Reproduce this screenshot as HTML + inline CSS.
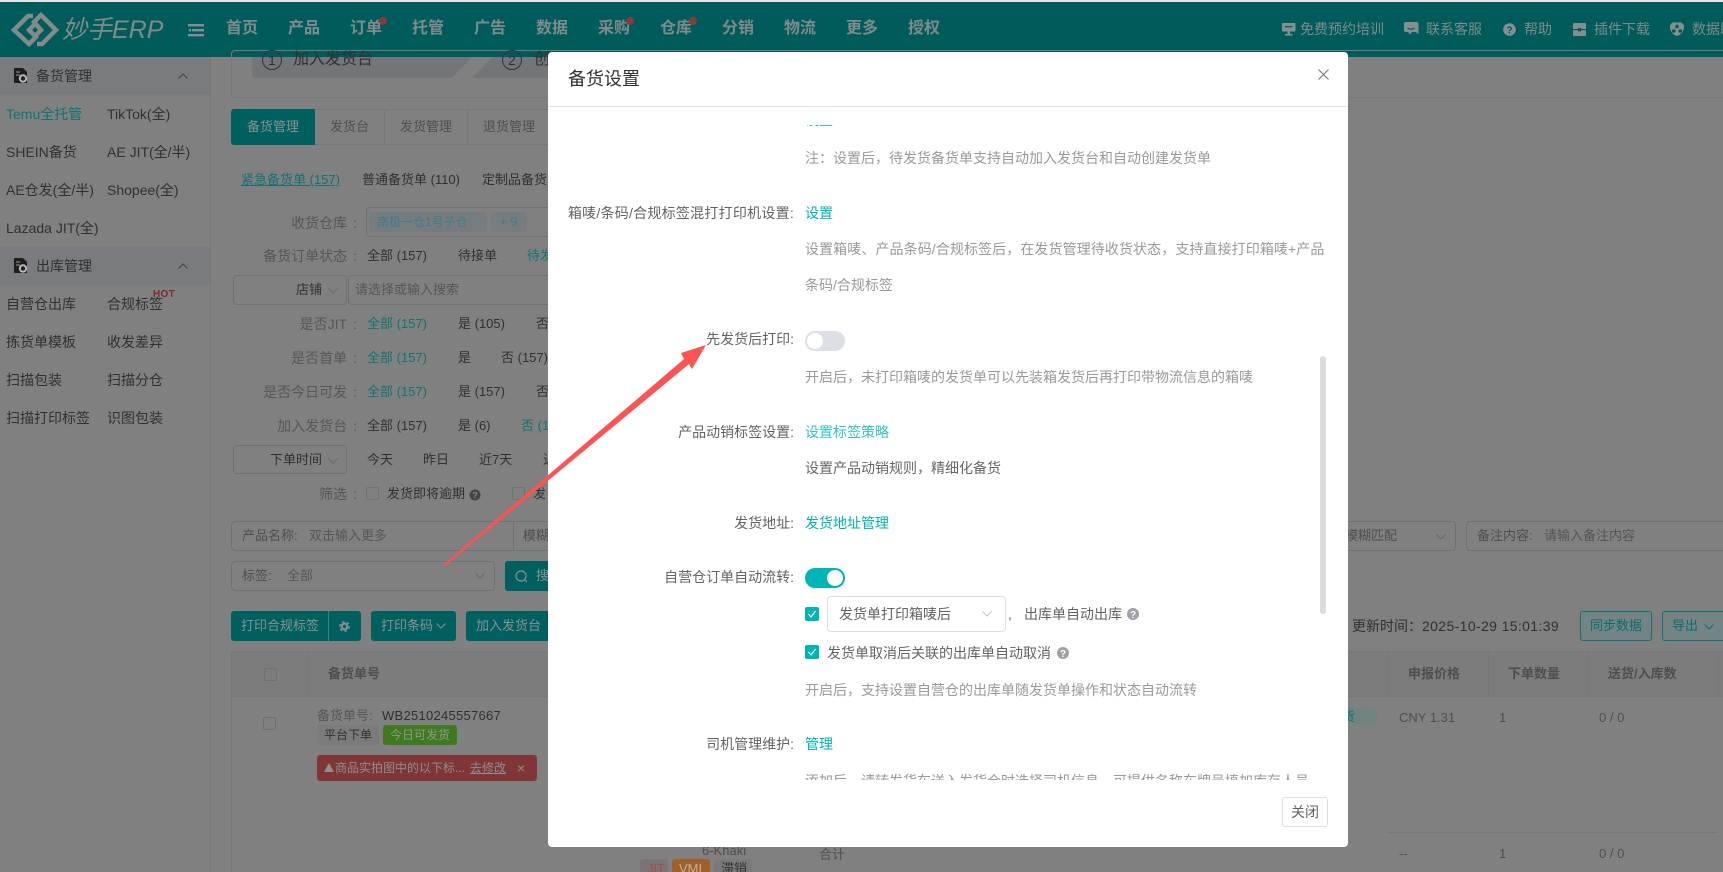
<!DOCTYPE html>
<html lang="zh-CN">
<head>
<meta charset="utf-8">
<title>备货设置</title>
<style>
html,body{margin:0;padding:0;width:1723px;height:872px;overflow:hidden;background:#808080}
#w{position:absolute;left:0;top:0;width:1723px;height:872px;overflow:hidden;filter:blur(.3px);font-family:"Liberation Sans","Noto Sans CJK SC",sans-serif;font-size:14px;color:#333}
.t{position:absolute;line-height:20px;margin-top:-10px;white-space:nowrap}
.b{position:absolute;box-sizing:border-box}
svg{position:absolute;overflow:visible}
.s{font-size:13px}
.g{color:#4e4e4e}.d{color:#303030}.k{color:#127272}.p{color:#565656}
.c{display:inline-block;margin:0 2px 0 6px}
.nav{font-size:16px;font-weight:700;color:#7f8b8b;top:29px}
.hr{color:#7f8b8b;top:29px}
.line{border:1px solid #6f7072;border-radius:4px}
.btn{background:#006060;border-radius:3px}
.w{color:#8c8f8f}
.th{font-weight:700;color:#4e4e4e;font-size:13px}
.lb{color:#606266;right:546px}
.ln{color:#00b3b3}
.ds{color:#999}
.dot{position:absolute;width:8px;height:8px;border-radius:50%;background:#8a3a3a}
.tag{overflow:hidden;font-size:13px;line-height:20px;padding-left:7px;border-radius:3px 3px 0 0}
</style>
</head>
<body>
<div id="w">
<!-- top -->
<div class="b" style="left:0;top:0;width:1723px;height:2px;background:#e4e4e4"></div>
<div class="b" style="left:0;top:2px;width:1723px;height:55px;background:#005b5b"></div>
<svg style="left:0;top:0" width="70" height="57" fill="none" stroke="#828a8a" stroke-width="4.5" stroke-linejoin="miter">
<path d="M33 16 L28 16 L14 30 L29 44 L36 37 L29 30 L34 25"/>
<path d="M37 44 L42 44 L56 30 L41 15 L34 22 L41 30 L36 35"/>
</svg>
<div class="t" style="left:62px;top:30px;font-size:25px;font-style:italic;color:#808a8a;line-height:30px;margin-top:-15px">妙手ERP</div>
<svg style="left:188px;top:24px" width="16" height="12" fill="#858f8f"><rect x="0" y="0" width="16" height="2.4"/><rect x="4" y="5" width="12" height="2.4"/><rect x="0" y="10" width="16" height="2.4"/><path d="M0 6.2L3 4.4V8z"/></svg>
<div class="t nav" style="left:226px">首页</div>
<div class="t nav" style="left:288px">产品</div>
<div class="t nav" style="left:350px">订单</div>
<div class="t nav" style="left:412px">托管</div>
<div class="t nav" style="left:474px">广告</div>
<div class="t nav" style="left:536px">数据</div>
<div class="t nav" style="left:598px">采购</div>
<div class="t nav" style="left:660px">仓库</div>
<div class="t nav" style="left:722px">分销</div>
<div class="t nav" style="left:784px">物流</div>
<div class="t nav" style="left:846px">更多</div>
<div class="t nav" style="left:908px">授权</div>
<div class="dot" style="left:379px;top:17px"></div>
<div class="dot" style="left:626px;top:17px"></div>
<div class="dot" style="left:689px;top:17px"></div>

<svg style="left:1282px;top:23px" width="14" height="14" fill="#858f8f"><rect x="0" y="0" width="13.5" height="8.5" rx="1"/><rect x="5.5" y="8.5" width="2.5" height="3"/><rect x="3" y="11" width="7.5" height="1.6"/><rect x="3" y="3" width="7.5" height="1.3" fill="#005b5b"/></svg>
<div class="t hr" style="left:1300px">免费预约培训</div>
<svg style="left:1404px;top:22px" width="15" height="14" fill="#858f8f"><path d="M2 0H12.5A2 2 0 0 1 14.5 2V12L11.5 10H8L6 12.5 4 10H2A2 2 0 0 1 0 8V2A2 2 0 0 1 2 0Z"/><path d="M3.5 6Q7 8.5 10.5 6" stroke="#005b5b" fill="none" stroke-width="1.2"/></svg>
<div class="t hr" style="left:1426px">联系客服</div>
<svg style="left:1503px;top:23px" width="13" height="13"><circle cx="6.5" cy="6.5" r="6.3" fill="#858f8f"/><text x="6.5" y="10.4" font-size="10" font-weight="700" text-anchor="middle" fill="#005b5b" font-family="Liberation Sans">?</text></svg>
<div class="t hr" style="left:1524px">帮助</div>
<svg style="left:1573px;top:23px" width="13" height="13" fill="#858f8f"><rect x="0" y="0" width="13" height="13" rx="1"/><rect x="0" y="6" width="13" height="1.2" fill="#005b5b"/><rect x="5" y="5" width="3" height="3.4" fill="#005b5b"/></svg>
<div class="t hr" style="left:1594px">插件下载</div>
<svg style="left:1670px;top:22px" width="14" height="14"><path d="M7 1C9 -.5 14 0 14 5 14 9.5 10 13.5 7 14 4 13.5 0 9.5 0 5 0 0 5 -.5 7 1Z" fill="#858f8f"/><circle cx="7" cy="4.5" r="1.8" fill="#005b5b"/><circle cx="3.8" cy="9" r="1.8" fill="#005b5b"/><circle cx="10.2" cy="9" r="1.8" fill="#005b5b"/></svg>
<div class="b" style="left:1692px;top:19px;width:31px;height:20px;overflow:hidden;line-height:20px;white-space:nowrap;color:#7f8b8b">数据助手</div>

<!-- sidebar -->
<div class="b" style="left:210px;top:57px;width:1px;height:815px;background:#76777a"></div>
<div class="b" style="left:0;top:57px;width:210px;height:38px;background:#797b7e"></div>
<div class="b" style="left:0;top:247px;width:210px;height:38px;background:#797b7e"></div>
<svg style="left:14px;top:68px" width="14" height="16"><path d="M0 0H9L13 4V15H0Z" fill="#1e1e1e"/><path d="M2 4H6M2 7H6" stroke="#808080" stroke-width="1.3"/><circle cx="9" cy="10.5" r="3.2" fill="none" stroke="#b8b8b8" stroke-width="2"/></svg>
<svg style="left:14px;top:258px" width="14" height="16"><path d="M0 0H9L13 4V15H0Z" fill="#1e1e1e"/><path d="M2 4H6M2 7H6" stroke="#808080" stroke-width="1.3"/><circle cx="9" cy="10.5" r="3.2" fill="none" stroke="#b8b8b8" stroke-width="2"/></svg>
<div class="t d" style="left:36px;top:76px">备货管理</div>
<div class="t d" style="left:36px;top:266px">出库管理</div>
<svg style="left:178px;top:73px" width="10" height="6" fill="none" stroke="#444" stroke-width="1"><path d="M.5 5.5L5 1l4.500 4.500"/></svg>
<svg style="left:178px;top:263px" width="10" height="6" fill="none" stroke="#444" stroke-width="1"><path d="M.5 5.5L5 1l4.500 4.500"/></svg>
<div class="t k" style="left:6px;top:114px">Temu全托管</div>
<div class="t d" style="left:107px;top:114px">TikTok(全)</div>
<div class="t d" style="left:6px;top:152px">SHEIN备货</div>
<div class="t d" style="left:107px;top:152px">AE JIT(全/半)</div>
<div class="t d" style="left:6px;top:190px">AE仓发(全/半)</div>
<div class="t d" style="left:107px;top:190px">Shopee(全)</div>
<div class="t d" style="left:6px;top:228px">Lazada JIT(全)</div>
<div class="t d" style="left:6px;top:304px">自营仓出库</div>
<div class="t d" style="left:107px;top:304px">合规标签</div>
<div class="t" style="left:153px;top:295px;font-size:10px;font-weight:700;color:#7d2d2d;letter-spacing:.3px">HOT</div>
<div class="t d" style="left:6px;top:342px">拣货单模板</div>
<div class="t d" style="left:107px;top:342px">收发差异</div>
<div class="t d" style="left:6px;top:380px">扫描包装</div>
<div class="t d" style="left:107px;top:380px">扫描分仓</div>
<div class="t d" style="left:6px;top:418px">扫描打印标签</div>
<div class="t d" style="left:107px;top:418px">识图包装</div>

<!-- main top panel -->
<div class="b" style="left:231px;top:50px;width:1492px;height:48px;border:1px solid #77787a;border-right:0;border-radius:4px 0 0 4px"></div>
<svg style="left:252px;top:57px" width="400" height="21"><path d="M0 0H220L200 21H4Q0 21 0 17Z" fill="#747578"/><path d="M240 0H400V21H220Z" fill="#747578"/></svg>
<div class="b" style="left:262px;top:50px;width:20px;height:20px;border:1px solid #333;border-radius:50%"></div>
<div class="t d" style="left:268px;top:60px">1</div>
<div class="t d" style="left:293px;top:60px;font-size:16px">加入发货台</div>
<div class="b" style="left:502px;top:50px;width:20px;height:20px;border:1px solid #333;border-radius:50%"></div>
<div class="t d" style="left:508px;top:60px">2</div>
<div class="t d" style="left:534px;top:60px;font-size:16px">创</div>

<!-- tabs -->
<div class="b" style="left:231px;top:109px;width:320px;height:36px;border:1px solid #76777a;border-radius:3px"></div>
<div class="b" style="left:231px;top:109px;width:84px;height:36px;background:#006060;border-radius:3px 0 0 3px"></div>
<div class="b" style="left:384px;top:109px;width:1px;height:36px;background:#76777a"></div>
<div class="b" style="left:467px;top:109px;width:1px;height:36px;background:#76777a"></div>
<div class="t s" style="left:247px;top:127px;color:#8a9090">备货管理</div>
<div class="t g s" style="left:330px;top:127px">发货台</div>
<div class="t g s" style="left:400px;top:127px">发货管理</div>
<div class="t g s" style="left:483px;top:127px">退货管理</div>

<div class="t k s" style="left:241px;top:180px;text-decoration:underline">紧急备货单 (157)</div>
<div class="t d s" style="left:362px;top:180px">普通备货单 (110)</div>
<div class="t d s" style="left:482px;top:180px">定制品备货单</div>

<div class="t p" style="right:1364px;top:223px">收货仓库<span class="c">:</span></div>
<div class="b line" style="left:366px;top:207px;width:250px;height:30px"></div>
<div class="b" style="left:369px;top:212px;width:118px;height:20px;background:#767c80;border-radius:3px"></div>
<div class="t" style="left:377px;top:222px;color:#3f7c8c;font-size:12px">南极一仓1号子仓</div>
<div class="t" style="left:473px;top:222px;color:#5e8794;font-size:12px">×</div>
<div class="b" style="left:491px;top:212px;width:36px;height:20px;background:#767c80;border-radius:3px"></div>
<div class="t" style="left:500px;top:222px;color:#3f7c8c;font-size:12px">+ 9</div>

<div class="t p" style="right:1364px;top:256px">备货订单状态<span class="c">:</span></div>
<div class="t d s" style="left:367px;top:256px">全部 (157)</div>
<div class="t d s" style="left:458px;top:256px">待接单</div>
<div class="t k s" style="left:527px;top:256px">待发</div>

<div class="b line" style="left:233px;top:275px;width:114px;height:30px"></div>
<div class="t d s" style="left:296px;top:290px">店铺</div>
<svg style="left:328px;top:288px" width="10" height="6" fill="none" stroke="#666"><path d="M.5 .5L5 5l4.500-4.500"/></svg>
<div class="b line" style="left:348px;top:275px;width:250px;height:30px"></div>
<div class="t p s" style="left:355px;top:290px">请选择或输入搜索</div>

<div class="t p" style="right:1364px;top:324px">是否JIT<span class="c">:</span></div>
<div class="t k s" style="left:367px;top:324px">全部 (157)</div>
<div class="t d s" style="left:458px;top:324px">是 (105)</div>
<div class="t d s" style="left:536px;top:324px">否</div>
<div class="t p" style="right:1364px;top:358px">是否首单<span class="c">:</span></div>
<div class="t k s" style="left:367px;top:358px">全部 (157)</div>
<div class="t d s" style="left:458px;top:358px">是</div>
<div class="t d s" style="left:501px;top:358px">否 (157)</div>
<div class="t p" style="right:1364px;top:392px">是否今日可发<span class="c">:</span></div>
<div class="t k s" style="left:367px;top:392px">全部 (157)</div>
<div class="t d s" style="left:458px;top:392px">是 (157)</div>
<div class="t d s" style="left:536px;top:392px">否</div>
<div class="t p" style="right:1364px;top:426px">加入发货台<span class="c">:</span></div>
<div class="t d s" style="left:367px;top:426px">全部 (157)</div>
<div class="t d s" style="left:458px;top:426px">是 (6)</div>
<div class="t k s" style="left:521px;top:426px">否 (1</div>

<div class="b line" style="left:233px;top:445px;width:114px;height:29px"></div>
<div class="t d s" style="left:270px;top:460px">下单时间</div>
<svg style="left:328px;top:458px" width="10" height="6" fill="none" stroke="#666"><path d="M.5 .5L5 5l4.500-4.500"/></svg>
<div class="t d s" style="left:367px;top:460px">今天</div>
<div class="t d s" style="left:423px;top:460px">昨日</div>
<div class="t d s" style="left:479px;top:460px">近7天</div>
<div class="t d s" style="left:543px;top:460px">近</div>

<div class="t p" style="right:1364px;top:494px">筛选<span class="c">:</span></div>
<div class="b" style="left:366px;top:487px;width:13px;height:13px;border:1px solid #707173;border-radius:2px"></div>
<div class="t d s" style="left:387px;top:494px">发货即将逾期</div>
<svg style="left:469px;top:489px" width="12" height="12"><circle cx="6" cy="6" r="5.500" fill="#444"/><text x="6" y="9.500" font-size="9" font-weight="700" text-anchor="middle" fill="#888" font-family="Liberation Sans">?</text></svg>
<div class="b" style="left:512px;top:487px;width:13px;height:13px;border:1px solid #707173;border-radius:2px"></div>
<div class="t d s" style="left:533px;top:494px">发</div>

<div class="b line" style="left:231px;top:521px;width:1225px;height:30px"></div>
<div class="b" style="left:513px;top:521px;width:1px;height:30px;background:#6f7072"></div>
<div class="t g s" style="left:242px;top:536px">产品名称:</div>
<div class="t p s" style="left:309px;top:536px">双击输入更多</div>
<div class="t g s" style="left:523px;top:536px">模糊匹配</div>
<div class="t g s" style="left:1345px;top:536px">模糊匹配</div>
<svg style="left:1436px;top:534px" width="10" height="6" fill="none" stroke="#666"><path d="M.5 .5L5 5l4.500-4.500"/></svg>
<div class="b" style="left:1466px;top:521px;width:257px;height:30px;border:1px solid #6f7072;border-right:0;border-radius:4px 0 0 4px"></div>
<div class="t g s" style="left:1477px;top:536px">备注内容:</div>
<div class="t p s" style="left:1544px;top:536px">请输入备注内容</div>

<div class="b line" style="left:231px;top:561px;width:264px;height:30px"></div>
<div class="t g s" style="left:242px;top:576px">标签:</div>
<div class="t p s" style="left:287px;top:576px">全部</div>
<svg style="left:475px;top:573px" width="10" height="6" fill="none" stroke="#666"><path d="M.5 .5L5 5l4.500-4.500"/></svg>
<div class="b btn" style="left:505px;top:561px;width:60px;height:30px"></div>
<svg style="left:515px;top:570px" width="13" height="13" fill="none" stroke="#8a9090" stroke-width="1.200"><circle cx="6" cy="6" r="5"/><path d="M9.500 9.500L12 12"/></svg>
<div class="t w s" style="left:536px;top:576px">搜索</div>

<div class="b btn" style="left:231px;top:611px;width:130px;height:30px"></div>
<div class="b" style="left:328px;top:611px;width:1px;height:30px;background:#3f7f7f"></div>
<div class="t w s" style="left:241px;top:626px">打印合规标签</div>
<svg style="left:339px;top:621px" width="11" height="11" fill="none" stroke="#8c8f8f"><circle cx="5.500" cy="5.500" r="2.800" stroke-width="2.200"/><circle cx="5.500" cy="5.500" r="4.800" stroke-width="1.400" stroke-dasharray="2.500 2.500"/></svg>
<div class="b btn" style="left:371px;top:611px;width:85px;height:30px"></div>
<div class="t w s" style="left:381px;top:626px">打印条码</div>
<svg style="left:436px;top:623px" width="10" height="6" fill="none" stroke="#8c8f8f"><path d="M.5 .5L5 5l4.500-4.500"/></svg>
<div class="b btn" style="left:466px;top:611px;width:85px;height:30px"></div>
<div class="t w s" style="left:476px;top:626px">加入发货台</div>
<div class="t d" style="left:1352px;top:626px">更新时间：<span style="letter-spacing:.37px">2025-10-29 15:01:39</span></div>
<div class="b" style="left:1580px;top:611px;width:72px;height:30px;border:1px solid #0c7474;border-radius:3px;background:#748484"></div>
<div class="t s" style="left:1590px;top:626px;color:#0c6c6c">同步数据</div>
<div class="b" style="left:1662px;top:611px;width:61px;height:30px;border:1px solid #0c7474;border-right:0;border-radius:3px 0 0 3px;background:#748484"></div>
<div class="t s" style="left:1672px;top:626px;color:#0c6c6c">导出</div>
<svg style="left:1704px;top:624px" width="10" height="6" fill="none" stroke="#0c6c6c"><path d="M.5 .5L5 5l4.500-4.500"/></svg>

<!-- table -->
<div class="b" style="left:231px;top:651px;width:1492px;height:46px;background:#7c7c7d;border:1px solid #76777a;border-width:1px 0 1px 1px"></div>
<div class="b" style="left:231px;top:651px;width:1px;height:221px;background:#76777a"></div>
<div class="b" style="left:307px;top:651px;width:1px;height:46px;background:#76777a"></div>
<div class="b" style="left:1388px;top:651px;width:1px;height:46px;background:#76777a"></div>
<div class="b" style="left:1488px;top:651px;width:1px;height:46px;background:#76777a"></div>
<div class="b" style="left:1588px;top:651px;width:1px;height:46px;background:#76777a"></div>
<div class="b" style="left:1718px;top:651px;width:1px;height:46px;background:#76777a"></div>
<div class="b" style="left:264px;top:668px;width:13px;height:13px;border:1px solid #6f7072;border-radius:2px"></div>
<div class="t th" style="left:328px;top:674px">备货单号</div>
<div class="t th" style="left:1408px;top:674px">申报价格</div>
<div class="t th" style="left:1508px;top:674px">下单数量</div>
<div class="t th" style="left:1608px;top:674px">送货/入库数</div>

<div class="b" style="left:263px;top:717px;width:13px;height:13px;border:1px solid #6f7072;border-radius:2px"></div>
<div class="t p s" style="left:317px;top:716px">备货单号:</div>
<div class="t d s" style="left:382px;top:716px;letter-spacing:.27px">WB2510245557667</div>
<div class="b" style="left:317px;top:725px;width:62px;height:20px;background:#7b7b7b;border-radius:3px"></div>
<div class="t d" style="left:324px;top:735px;font-size:12px">平台下单</div>
<div class="b" style="left:383px;top:725px;width:74px;height:20px;background:#40791f;border-radius:3px"></div>
<div class="t" style="left:390px;top:735px;font-size:12px;color:#8f9a8a">今日可发货</div>
<div class="b" style="left:317px;top:755px;width:220px;height:26px;background:#803636;border-radius:3px"></div>
<svg style="left:324px;top:763px" width="10" height="9"><path d="M5 0L10 9H0Z" fill="#909090"/></svg>
<div class="t" style="left:335px;top:768px;color:#8f8f8f;font-size:12px">商品实拍图中的以下标...</div>
<div class="t" style="left:470px;top:768px;color:#8f8f8f;font-size:12px;text-decoration:underline">去修改</div>
<div class="t" style="left:517px;top:768px;color:#8f8f8f">×</div>

<div class="b" style="left:1300px;top:707px;width:77px;height:20px;background:#70837f;border-radius:3px"></div>
<div class="t k s" style="left:1342px;top:717px">货</div>
<div class="t g s" style="left:1399px;top:718px">CNY 1.31</div>
<div class="t g s" style="left:1499px;top:718px">1</div>
<div class="t g s" style="left:1599px;top:718px">0 / 0</div>
<div class="b" style="left:1388px;top:832px;width:329px;height:1px;background:#76777a"></div>
<div class="t g s" style="left:1399px;top:854px">--</div>
<div class="t g s" style="left:1499px;top:854px">1</div>
<div class="t g s" style="left:1599px;top:854px">0 / 0</div>

<div class="t g s" style="left:702px;top:851px">6-Khaki</div>
<div class="t g s" style="left:819px;top:855px">合计</div>
<div class="b tag" style="left:640px;top:859px;width:28px;height:13px;background:#7c7474;color:#9a4d4d">JIT</div>
<div class="b tag" style="left:672px;top:859px;width:38px;height:13px;background:#a0602a;color:#c0b0a0">VMI</div>
<div class="b tag" style="left:714px;top:859px;width:38px;height:13px;background:#7a7a7a;color:#303030">滞销</div>

<!-- modal -->
<div class="b" style="left:548px;top:52px;width:800px;height:795px;background:#fff;border-radius:4px"></div>
<div class="t" style="left:568px;top:79px;font-size:18px;line-height:24px;margin-top:-12px;color:#303133">备货设置</div>
<svg style="left:1318px;top:69px" width="11" height="11" fill="none" stroke="#707070"><path d="M.5 .5L10.500 10.500M10.500 .5L.5 10.500"/></svg>
<div class="b" style="left:548px;top:106px;width:800px;height:1px;background:#e2e2ea"></div>

<div class="b" style="left:548px;top:125px;width:800px;height:655px;overflow:hidden">
  <div class="b" style="left:-548px;top:-125px;width:1340px;height:780px">
  <div class="t ln" style="left:805px;top:120px">设置</div>
  <div class="t ds" style="left:805px;top:158px">注：设置后，待发货备货单支持自动加入发货台和自动创建发货单</div>

  <div class="t lb" style="top:213px;letter-spacing:.25px">箱唛/条码/合规标签混打打印机设置:</div>
  <div class="t ln" style="left:805px;top:213px">设置</div>
  <div class="t ds" style="left:805px;top:249px;letter-spacing:.09px">设置箱唛、产品条码/合规标签后，在发货管理待收货状态，支持直接打印箱唛+产品</div>
  <div class="t ds" style="left:805px;top:285px">条码/合规标签</div>

  <div class="t lb" style="top:339px">先发货后打印:</div>
  <div class="b" style="left:805px;top:331px;width:40px;height:20px;background:#dcdfe6;border-radius:10px"></div>
  <div class="b" style="left:807px;top:333px;width:16px;height:16px;background:#fff;border-radius:50%"></div>
  <div class="t ds" style="left:805px;top:377px">开启后，未打印箱唛的发货单可以先装箱发货后再打印带物流信息的箱唛</div>

  <div class="t lb" style="top:432px">产品动销标签设置:</div>
  <div class="t ln" style="left:805px;top:432px;color:#33c3c3">设置标签策略</div>
  <div class="t" style="left:805px;top:468px;color:#666">设置产品动销规则，精细化备货</div>

  <div class="t lb" style="top:523px">发货地址:</div>
  <div class="t ln" style="left:805px;top:523px">发货地址管理</div>

  <div class="t lb" style="top:577px">自营仓订单自动流转:</div>
  <div class="b" style="left:805px;top:568px;width:40px;height:20px;background:#00b5b5;border-radius:10px"></div>
  <div class="b" style="left:827px;top:570px;width:16px;height:16px;background:#fff;border-radius:50%"></div>

  <div class="b" style="left:805px;top:607px;width:14px;height:14px;background:#00b5b5;border-radius:2px"></div>
  <svg style="left:805px;top:607px" width="14" height="14" fill="none" stroke="#fff" stroke-width="1.100"><path d="M3.500 7L6 10L10.500 4"/></svg>
  <div class="b" style="left:827px;top:596px;width:179px;height:36px;border:1px solid #dcdfe6;border-radius:4px"></div>
  <div class="t" style="left:839px;top:614px;color:#606266">发货单打印箱唛后</div>
  <svg style="left:982px;top:611px" width="10" height="6" fill="none" stroke="#c0c4cc"><path d="M.5 .5L5 5l4.500-4.500"/></svg>
  <div class="t" style="left:1008px;top:614px;color:#606266">,</div>
  <div class="t" style="left:1024px;top:614px;color:#606266">出库单自动出库</div>
  <svg style="left:1127px;top:608px" width="12" height="12"><circle cx="6" cy="6" r="6" fill="#a0a0a8"/><text x="6" y="9.800" font-size="10" font-weight="700" text-anchor="middle" fill="#fff" font-family="Liberation Sans">?</text></svg>

  <div class="b" style="left:805px;top:645px;width:14px;height:14px;background:#00b5b5;border-radius:2px"></div>
  <svg style="left:805px;top:645px" width="14" height="14" fill="none" stroke="#fff" stroke-width="1.100"><path d="M3.500 7L6 10L10.500 4"/></svg>
  <div class="t" style="left:827px;top:653px;color:#606266">发货单取消后关联的出库单自动取消</div>
  <svg style="left:1057px;top:647px" width="12" height="12"><circle cx="6" cy="6" r="6" fill="#a0a0a8"/><text x="6" y="9.800" font-size="10" font-weight="700" text-anchor="middle" fill="#fff" font-family="Liberation Sans">?</text></svg>

  <div class="t ds" style="left:805px;top:690px">开启后，支持设置自营仓的出库单随发货单操作和状态自动流转</div>

  <div class="t lb" style="top:744px">司机管理维护:</div>
  <div class="t ln" style="left:805px;top:744px">管理</div>
  <div class="t ds" style="left:805px;top:781px">添加后，请转发货车送入发货仓时选择司机信息，可提供名称车牌号填加库存人员</div>
  </div>
</div>

<div class="b" style="left:1320px;top:356px;width:6px;height:258px;background:#dcdce0;border-radius:3px"></div>

<div class="b" style="left:1282px;top:797px;width:46px;height:30px;border:1px solid #dcdfe6;border-radius:3px"></div>
<div class="t" style="left:1291px;top:812px;color:#606266">关闭</div>

<!-- arrow -->
<svg style="left:0;top:0" width="1723" height="872"><polygon points="443,565 684,359 681,353 706,345 692,369 689,364 445,566" fill="#fb5454"/></svg>
</div>
</body>
</html>
